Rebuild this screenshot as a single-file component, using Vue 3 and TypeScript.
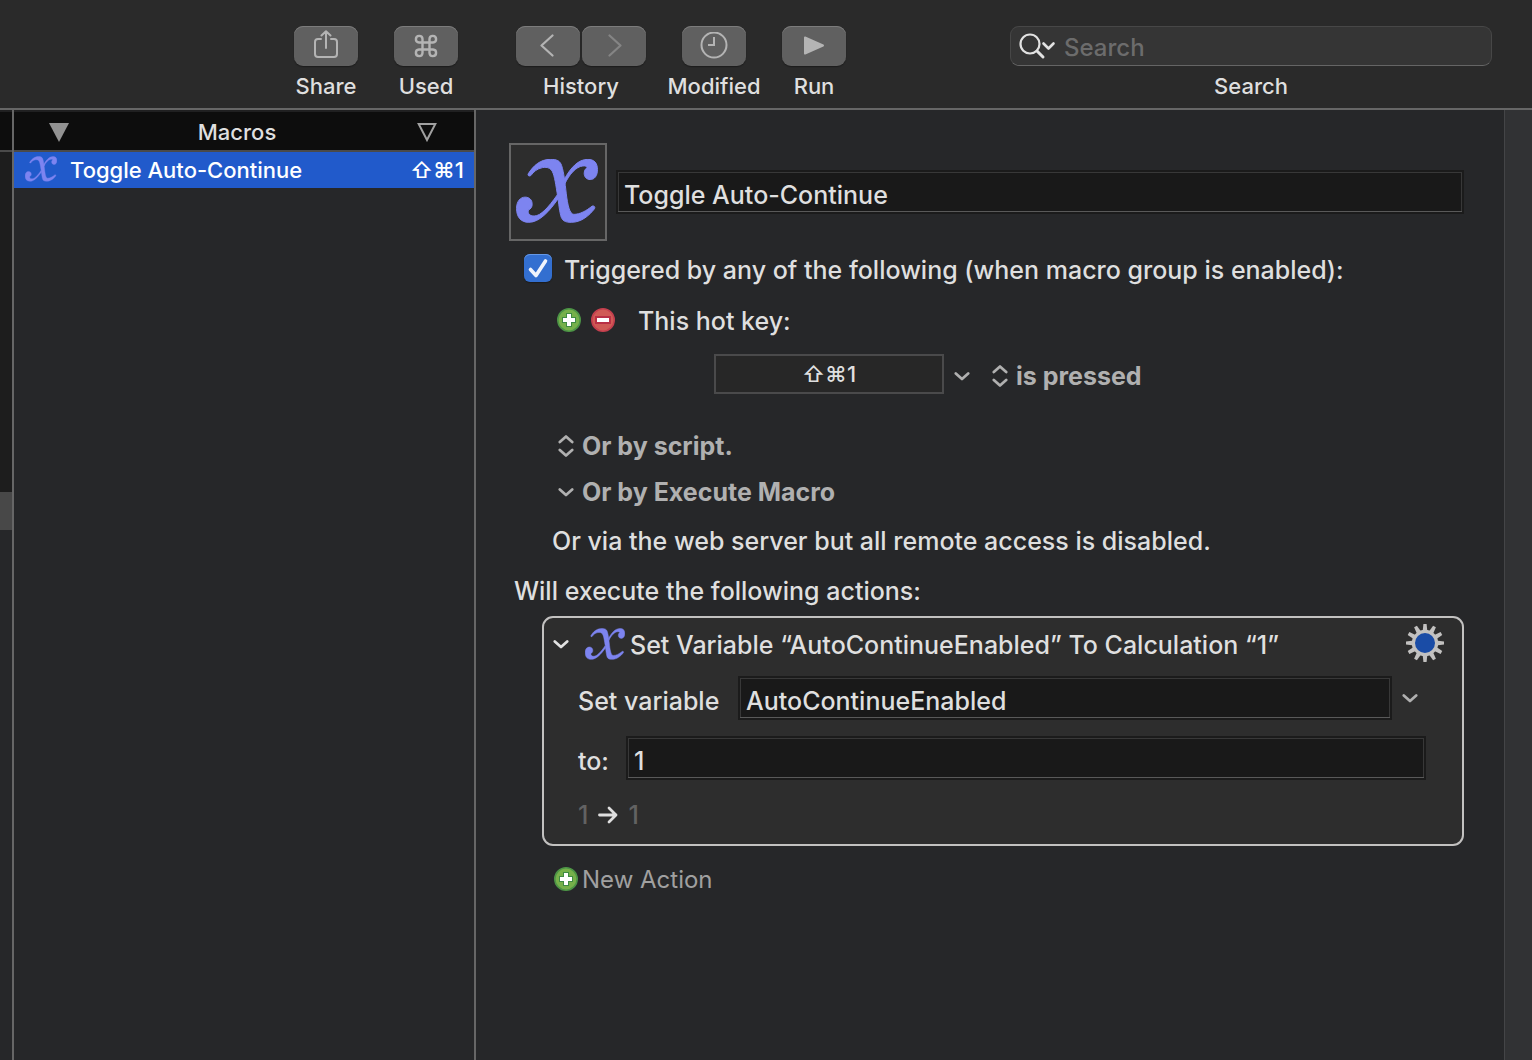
<script setup lang="ts">
import { ref } from 'vue'

const search = ref('')
const macroName = ref('Toggle Auto-Continue')
const triggered = ref(true)
const hotKey = ref('⇧⌘1')
const pressMode = ref('is pressed')
const scriptMode = ref('Or by script.')
const executeMode = ref('Or by Execute Macro')
const variableName = ref('AutoContinueEnabled')
const expression = ref('1')

const gearAngles: number[] = Array.from({ length: 12 }, (_, i) => i * 30)
</script>

<template>
  <div class="app">
    <svg class="defs" aria-hidden="true">
      <symbol id="variable" viewBox="0 0 246 193">
        <g stroke="#7d84f0" stroke-width="3" stroke-linejoin="round">
          <path d="M36 45C52 20 72 1 104 1C122 1 132 5 137 20C144 42 147 70 151 105C155 138 161 167 174 167C192 167 212 156 229 142C235 140 239 145 236 150C220 171 196 191 166 191C147 191 138 186 134 170C129 150 128 128 123 100C118 68 114 43 106 33C99 25 89 24 79 26C62 30 53 38 44 50C39 53 34 50 36 45Z" />
          <path d="M124 108C97 146 74 172 54 172C40 172 34 164 37 154C43 151 49 145 48 135C48 123 39 115 27 115C12 115 1 128 1 149C1 175 14 191 38 191C70 191 100 158 127 119Z" />
          <path d="M144 63C164 26 187 1 216 1C235 1 245 12 245 32C245 51 236 62 223 62C212 62 205 54 205 43C205 33 211 28 214 26C212 22 208 20 201 21C180 23 160 47 147 74Z" />
        </g>
      </symbol>
      <symbol id="plus" viewBox="0 0 24 24">
        <circle cx="12" cy="12" r="11.2" fill="#76b04a" stroke="#4c9446" stroke-width="1.6" />
        <path d="M9 5h6v4h4v6h-4v4H9v-4H5V9h4z" fill="#3f8a43" />
        <path d="M10 6h4v4h4v4h-4v4h-4v-4H6v-4h4z" fill="#fff" />
      </symbol>
      <symbol id="minus" viewBox="0 0 24 24">
        <circle cx="12" cy="12" r="11.2" fill="#d05a55" stroke="#c43f4e" stroke-width="1.6" />
        <path d="M4 8h16v8H4z" fill="#b93045" />
        <path d="M6 10h12v4H6z" fill="#fff" />
      </symbol>
      <symbol id="chevron" viewBox="0 0 16 24">
        <path d="M1.800 9.500L8 15l6.200-5.500" fill="none" stroke="currentColor" stroke-width="2.700" stroke-linecap="round" stroke-linejoin="round" />
      </symbol>
      <symbol id="updown" viewBox="0 0 16 24">
        <path d="M1.800 8L8 2.500l6.200 5.500M1.800 16L8 21.500l6.200-5.500" fill="none" stroke="currentColor" stroke-width="2.700" stroke-linecap="round" stroke-linejoin="round" />
      </symbol>
    </svg>

    <header class="toolbar">
      <div class="tool">
        <button id="share" type="button" class="tool-btn">
          <svg width="28" height="32" viewBox="0 0 28 32" fill="none" stroke="#b4b4b4" stroke-width="2" stroke-linecap="round" stroke-linejoin="round">
            <path d="M9 9H6a3 3 0 0 0-3 3v12a3 3 0 0 0 3 3h16a3 3 0 0 0 3-3V12a3 3 0 0 0-3-3h-3M14 18V1.500M9.500 5.500L14 1.200 18.500 5.500" />
          </svg>
        </button>
        <label for="share">Share</label>
      </div>
      <div class="tool">
        <button id="used" type="button" class="tool-btn">
          <svg width="24" height="24" viewBox="0 0 24 24" fill="none" stroke="#b4b4b4" stroke-width="2.400">
            <path d="M8.500 5a3.300 3.300 0 1 0-3.500 3.500h14A3.300 3.300 0 1 0 15.500 5v14a3.300 3.300 0 1 0 3.500-3.500H5A3.300 3.300 0 1 0 8.500 19z" />
          </svg>
        </button>
        <label for="used">Used</label>
      </div>
      <div class="tool history">
        <div class="pair">
          <button id="back" type="button" class="tool-btn" aria-label="Back">
            <svg width="16" height="24" viewBox="0 0 16 24" fill="none" stroke="#b4b4b4" stroke-width="2.200" stroke-linecap="round" stroke-linejoin="round"><path d="M12.500 1.500L1.500 11.500l11 10" /></svg>
          </button>
          <button type="button" class="tool-btn" aria-label="Forward">
            <svg width="16" height="24" viewBox="0 0 16 24" fill="none" stroke="#858585" stroke-width="2.200" stroke-linecap="round" stroke-linejoin="round"><path d="M3.500 1.500l11 10-11 10" /></svg>
          </button>
        </div>
        <label for="back">History</label>
      </div>
      <div class="tool">
        <button id="modified" type="button" class="tool-btn">
          <svg width="28" height="28" viewBox="0 0 28 28" fill="none" stroke="#b4b4b4" stroke-width="2"><circle cx="14" cy="13" r="12.500" /><path d="M14 5v8H8" /></svg>
        </button>
        <label for="modified">Modified</label>
      </div>
      <div class="tool">
        <button id="run" type="button" class="tool-btn">
          <svg width="22" height="20" viewBox="0 0 22 20"><path d="M2 1.500L20 9.500 2 17.500z" fill="#b4b4b4" stroke="#b4b4b4" stroke-width="2" stroke-linejoin="round" /></svg>
        </button>
        <label for="run">Run</label>
      </div>
      <div class="tool search">
        <div class="search-box">
          <svg width="38" height="28" viewBox="0 0 38 28" fill="none" stroke="#e2e2e2" stroke-linecap="round" stroke-linejoin="round">
            <circle cx="11" cy="12" r="9.500" stroke-width="2.200" /><path d="M18 19l6 6" stroke-width="3" /><path d="M24.500 11.500l5 5 5-5" stroke-width="2.600" />
          </svg>
          <input id="search" v-model="search" type="text" placeholder="Search" />
        </div>
        <label for="search">Search</label>
      </div>
    </header>

    <div class="body">
      <aside class="groups">
        <div class="col-head"></div>
        <div class="groups-list"></div>
        <div class="groups-selected"></div>
      </aside>

      <nav class="macros">
        <div class="col-head">
          <button type="button" class="sort" aria-label="Sort">
            <svg width="20" height="20" viewBox="0 0 20 20"><path d="M0 1h20L10 20z" fill="#929292" /></svg>
          </button>
          <span>Macros</span>
          <button type="button" class="sort" aria-label="Filter">
            <svg width="20" height="20" viewBox="0 0 20 20"><path d="M1.700 2h16.600L10 18z" fill="none" stroke="#a0a0a0" stroke-width="2" /></svg>
          </button>
        </div>
        <a href="#" class="macro">
          <svg class="macro-icon"><use href="#variable" /></svg>
          <span class="macro-name">Toggle Auto-Continue</span>
          <span>⇧⌘1</span>
        </a>
      </nav>

      <main class="editor">
        <div class="title-row">
          <button type="button" class="icon-well" aria-label="Macro icon"><svg><use href="#variable" /></svg></button>
          <input v-model="macroName" class="field" type="text" aria-label="Macro name" />
        </div>

        <div class="line trigger">
          <span class="check">
            <input id="triggered" v-model="triggered" type="checkbox" />
            <svg v-if="triggered" viewBox="0 0 28 28"><path d="M6.500 15.500l5.500 6L21.500 7" fill="none" stroke="#f0f4fc" stroke-width="3.600" stroke-linecap="round" stroke-linejoin="round" /></svg>
          </span>
          <label for="triggered">Triggered by any of the following (when macro group is enabled):</label>
        </div>

        <div class="line hot-title">
          <button type="button" class="round" aria-label="Add trigger"><svg><use href="#plus" /></svg></button>
          <button type="button" class="round" aria-label="Remove trigger"><svg><use href="#minus" /></svg></button>
          <label for="hotkey">This hot key:</label>
        </div>

        <div class="line hot-row">
          <input id="hotkey" v-model="hotKey" class="hotkey" type="text" />
          <button type="button" class="glyph" aria-label="Hot key options"><svg><use href="#chevron" /></svg></button>
          <div class="popup">
            <svg><use href="#updown" /></svg>
            <select v-model="pressMode" aria-label="Hot key mode"><option>is pressed</option></select>
          </div>
        </div>

        <div class="line popup script">
          <svg><use href="#updown" /></svg>
          <select v-model="scriptMode" aria-label="Script trigger"><option>Or by script.</option></select>
        </div>
        <div class="line popup execute">
          <svg><use href="#chevron" /></svg>
          <select v-model="executeMode" aria-label="Execute macro trigger"><option>Or by Execute Macro</option></select>
        </div>
        <p class="line web">Or via the web server but all remote access is disabled.</p>
        <p class="line will">Will execute the following actions:</p>

        <section class="action">
          <div class="action-head">
            <button type="button" class="glyph light" aria-label="Collapse"><svg><use href="#chevron" /></svg></button>
            <svg class="action-icon"><use href="#variable" /></svg>
            <h2>Set Variable “AutoContinueEnabled” To Calculation “1”</h2>
            <button type="button" class="gear" aria-label="Action menu">
              <svg viewBox="-19 -19 38 38">
                <path v-for="a in gearAngles" :key="a" d="M-2.400-11L-1.600-19h3.200L2.400-11z" fill="#c2c1c0" :transform="`rotate(${a})`" />
                <circle r="11.600" fill="#1a4ca6" stroke="#c2c1c0" stroke-width="3.200" />
              </svg>
            </button>
          </div>
          <div class="action-row variable-row">
            <label for="variable-name">Set variable</label>
            <input id="variable-name" v-model="variableName" class="field" type="text" />
            <button type="button" class="glyph" aria-label="Choose variable"><svg><use href="#chevron" /></svg></button>
          </div>
          <div class="action-row to-row">
            <label for="expression">to:</label>
            <input id="expression" v-model="expression" class="field" type="text" />
          </div>
          <div class="result">
            <span>1</span>
            <svg width="20" height="18" viewBox="0 0 20 18" fill="none" stroke="#dfdfdf" stroke-width="2.800" stroke-linecap="round" stroke-linejoin="round"><path d="M1.500 9h16.500M11 2l7 7-7 7" /></svg>
            <span>1</span>
          </div>
        </section>

        <button type="button" class="new-action"><svg><use href="#plus" /></svg>New Action</button>
      </main>
      <div class="gutter"></div>
    </div>
  </div>
</template>

<style>
body {
  margin: 0;
  background: #262729;
}
</style>

<style scoped>
.app {
  display: flex;
  flex-direction: column;
  min-height: 100vh;
  font-family: Inter, "DejaVu Sans", sans-serif;
  font-size: 25px;
  font-weight: 500;
  color: #dfdfdf;
  background: #262729;
}
.app * {
  box-sizing: border-box;
}
.defs {
  position: absolute;
  width: 0;
  height: 0;
}
button,
input,
select {
  margin: 0;
  padding: 0;
  border: 0;
  background: none;
  color: inherit;
  font: inherit;
  outline: none;
  appearance: none;
}
button {
  display: flex;
  align-items: center;
  justify-content: center;
}
svg {
  flex: none;
}

.toolbar {
  display: flex;
  height: 110px;
  padding: 26px 40px 0 294px;
  gap: 36px;
  background: #2a2a2a;
  border-bottom: 2px solid #666;
}
.tool {
  display: flex;
  flex-direction: column;
  align-items: center;
  flex: none;
  width: 64px;
  font-size: 22px;
}
.tool label {
  line-height: 40px;
  white-space: nowrap;
}
.tool.history {
  width: 130px;
  margin-left: 22px;
}
.pair {
  display: flex;
  gap: 2px;
}
.tool-btn {
  width: 64px;
  height: 40px;
  border-radius: 9px;
  background: #606060;
  box-shadow: inset 0 1px 0 #7c7c7c, 0 1px 1px #1c1c1c;
}
.tool.search {
  flex: 0 1 482px;
  margin-left: auto;
}
.search-box {
  display: flex;
  align-items: center;
  width: 100%;
  height: 40px;
  padding: 0 8px;
  gap: 7px;
  border: 1px solid #474747;
  border-bottom-color: #656565;
  border-radius: 9px;
  background: #353535;
}
.search-box input {
  flex: 1;
  min-width: 0;
  padding-top: 2px;
  font-size: 24px;
}
.search-box input::placeholder {
  color: #6c6c6c;
  opacity: 1;
}

.body {
  display: flex;
  flex: 1;
}
.groups {
  display: flex;
  flex-direction: column;
  flex: none;
  width: 14px;
  border-right: 2px solid #666;
}
.col-head {
  display: flex;
  align-items: center;
  justify-content: space-between;
  flex: none;
  height: 42px;
  padding: 2px 37px 0 35px;
  border-top: 2px solid #202021;
  border-bottom: 2px solid #4a4a4a;
  background: #0d0d0d;
  font-size: 22px;
}
.col-head span {
  margin-right: 12px;
}
.groups .col-head {
  padding: 0;
}
.groups-list {
  height: 340px;
  background: #1d1d1d;
}
.groups-selected {
  height: 38px;
  background: #484848;
}
.macros {
  flex: none;
  width: 462px;
  border-right: 2px solid #666;
}
.sort {
  width: 20px;
  height: 20px;
}
.macro {
  display: flex;
  align-items: center;
  height: 36px;
  padding: 0 10px 0 11px;
  background: #215acb;
  color: #fff;
  font-size: 22px;
  text-decoration: none;
}
.macro-icon {
  width: 32px;
  height: 26px;
  margin: 0 13px 2px 0;
}
.macro-name {
  flex: 1;
}
.macro-icon,
.icon-well svg,
.action-icon {
  fill: #7d84f0;
}

.editor {
  flex: 1;
  min-width: 0;
  padding: 33px 40px 32px 33px;
}
.title-row {
  display: flex;
  align-items: center;
  gap: 9px;
}
.icon-well {
  flex: none;
  width: 98px;
  height: 98px;
  padding: 0 2px 2px 0;
  border: 2px solid #666;
  background: #2d2d2d;
}
.icon-well svg {
  width: 82px;
  height: 64px;
}
.field {
  flex: 1;
  min-width: 0;
  height: 44px;
  padding: 6px 6px 0;
  border: 2px solid #1b1b1b;
  background: #191919;
  box-shadow: inset 0 -1px 0 #595959, inset 0 0 0 1px #383838;
}
.line {
  display: flex;
  align-items: center;
  height: 40px;
  margin: 0;
  white-space: nowrap;
}
.trigger {
  margin-top: 9px;
  padding-left: 15px;
  gap: 12px;
}
.check {
  display: grid;
  width: 28px;
  height: 28px;
  margin-bottom: 4px;
}
.check input,
.check svg {
  grid-area: 1 / 1;
  width: 28px;
  height: 28px;
}
.check input {
  border-radius: 6px;
  background: #336fd0;
  box-shadow: inset 0 1px 0 #6598e6, 0 1px 1px #1c1c1c;
}
.check svg {
  pointer-events: none;
}
.hot-title {
  margin-top: 11px;
  padding-left: 48px;
  gap: 10px;
}
.hot-title label {
  margin-left: 13px;
}
.round,
.round svg {
  width: 24px;
  height: 24px;
}
.round {
  margin-bottom: 2px;
}
.hot-row {
  margin-top: 13px;
  padding-left: 205px;
}
.hotkey {
  width: 230px;
  height: 40px;
  border: 2px solid #4a4a4b;
  background: #272727;
  font-size: 22px;
  text-align: center;
}
.glyph {
  flex: none;
  width: 16px;
  height: 24px;
  color: #b0b0b0;
}
.glyph svg {
  width: 16px;
  height: 24px;
}
.light {
  margin-top: 2px;
  color: #e2e2e2;
}
.hot-row .glyph {
  margin: 4px 22px 0 10px;
}
.hot-row .popup {
  padding-top: 3px;
}
.popup {
  display: flex;
  align-items: center;
  gap: 8px;
  color: #b0b0b0;
  font-weight: 700;
}
.popup svg {
  width: 16px;
  height: 24px;
}
.script {
  margin-top: 32px;
  padding-left: 49px;
}
.execute {
  margin-top: 6px;
  padding-left: 49px;
}
.web {
  margin-top: 9px;
  padding-left: 43px;
}
.will {
  margin-top: 10px;
  padding-left: 5px;
}
.action {
  height: 230px;
  margin: 5px 0 0 33px;
  border: 2px solid #c2c1c0;
  border-radius: 11px;
  background: #2d2d2d;
}
.action-head {
  display: flex;
  align-items: center;
  height: 50px;
  padding: 0 18px 0 9px;
}
.action-icon {
  width: 40px;
  height: 32px;
  margin: 2px 5px 0 16px;
}
h2 {
  flex: 1;
  margin: 0;
  padding-top: 4px;
  font-size: 25px;
  font-weight: 500;
  white-space: nowrap;
}
.gear,
.gear svg {
  width: 38px;
  height: 38px;
}
.action-row {
  display: flex;
  align-items: center;
  padding: 0 36px 0 34px;
}
.action-row label {
  padding-top: 6px;
}
.variable-row {
  margin-top: 8px;
}
.variable-row label {
  width: 160px;
}
.variable-row .glyph {
  margin-left: 10px;
  margin-right: 8px;
}
.to-row {
  margin-top: 16px;
}
.to-row label {
  width: 48px;
}
.result {
  display: flex;
  align-items: center;
  height: 40px;
  margin-top: 15px;
  padding-left: 34px;
  gap: 10px;
}
.result span {
  color: #626262;
}
.new-action {
  height: 40px;
  margin: 13px 0 0 45px;
  gap: 4px;
  color: #a0a0a0;
  font-size: 24px;
  font-weight: 400;
}
.new-action svg {
  width: 24px;
  height: 24px;
}
.gutter {
  flex: none;
  width: 28px;
  border-left: 1px solid #444547;
  background: #313234;
}
</style>
